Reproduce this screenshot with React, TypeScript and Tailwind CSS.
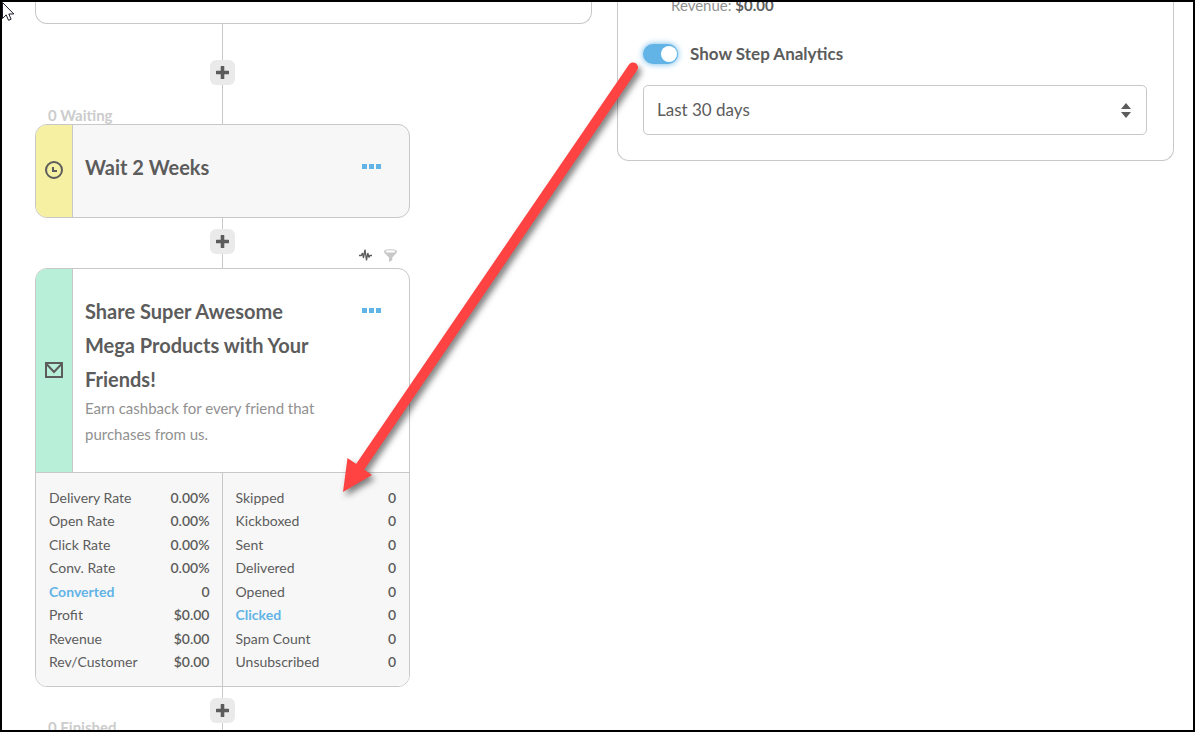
import type { ReactNode } from 'react';

type Stat = { label: string; value: string; link?: boolean };

const rates: Stat[] = [
  { label: 'Delivery Rate', value: '0.00%' },
  { label: 'Open Rate', value: '0.00%' },
  { label: 'Click Rate', value: '0.00%' },
  { label: 'Conv. Rate', value: '0.00%' },
  { label: 'Converted', value: '0', link: true },
  { label: 'Profit', value: '$0.00' },
  { label: 'Revenue', value: '$0.00' },
  { label: 'Rev/Customer', value: '$0.00' },
];

const counts: Stat[] = [
  { label: 'Skipped', value: '0' },
  { label: 'Kickboxed', value: '0' },
  { label: 'Sent', value: '0' },
  { label: 'Delivered', value: '0' },
  { label: 'Opened', value: '0' },
  { label: 'Clicked', value: '0', link: true },
  { label: 'Spam Count', value: '0' },
  { label: 'Unsubscribed', value: '0' },
];

function StatTable({ stats, name }: { stats: Stat[]; name: string }) {
  return (
    <table aria-label={name} className="h-[188px] w-full text-sm leading-5">
      <tbody>
        {stats.map((s) => (
          <tr key={s.label}>
            <th scope="row" className="p-0 text-left align-middle font-normal">
              {s.link ? (
                <a href="#" className="font-bold text-[#62b3e6]">{s.label}</a>
              ) : (
                s.label
              )}
            </th>
            <td className="p-0 text-right align-middle font-semibold">{s.value}</td>
          </tr>
        ))}
      </tbody>
    </table>
  );
}

function AddStep({ className, label, tools }: { className: string; label?: string; tools?: ReactNode }) {
  return (
    <div className={`grid grid-cols-[1fr_25px_1fr] ${className}`}>
      <div className="self-end pb-px pl-[13px] text-[15px] leading-4 font-bold text-[#cccccc]">{label}</div>
      <div className="flex flex-col items-center">
        <div className="h-9 min-h-0 w-px shrink bg-[#c8c8c8]" />
        <button
          type="button"
          aria-label="Add step"
          className="flex size-[25px] shrink-0 items-center justify-center rounded-md bg-[#eaeaea]"
        >
          <svg width="13" height="13" viewBox="0 0 13 13" fill="#5c5c5c">
            <path d="M5.3 0h2.4q.6 0 .6.6v4.1h4.1q.6 0 .6.6v2.4q0 .6-.6.6H8.300v4.100q0 .6-.6.6H5.300q-.6 0-.6-.6V8.300H.6Q0 8.300 0 7.700V5.300q0-.6.6-.6h4.100V.6q0-.6.6-.6z" />
          </svg>
        </button>
        <div className="w-px flex-1 bg-[#c8c8c8]" />
      </div>
      <div className="flex items-end justify-end gap-3 pr-[13px] pb-1.5">{tools}</div>
    </div>
  );
}

function MoreButton() {
  return (
    <button type="button" aria-label="More actions" className="flex h-[5px] shrink-0 gap-0.5">
      <span className="size-[5px] bg-[#62b3e6]" />
      <span className="size-[5px] bg-[#62b3e6]" />
      <span className="size-[5px] bg-[#62b3e6]" />
    </button>
  );
}

export default function App() {
  return (
    <div className="relative h-screen overflow-hidden border-2 border-black bg-white font-['Lato',sans-serif] text-[#5c5c5c]">
      <main className="grid grid-cols-2 items-start gap-[25px] pr-[19px] pl-[33px]">
        <section aria-label="Automation flow">
          <div className="h-[22px] rounded-b-xl border border-t-0 border-[#c8c8c8]" />
          <div className="w-[375px]">
            <AddStep className="h-[100px]" label="0 Waiting" />

            <article className="flex overflow-hidden rounded-xl border border-[#c8c8c8] bg-[#f7f7f7]">
              <div className="flex w-[37px] shrink-0 items-center justify-center border-r border-[#c8c8c8] bg-[#f6f0a2] pb-0.5">
                <svg width="18" height="18" viewBox="0 0 18 18" fill="none" stroke="#5c5c5c" strokeWidth="2">
                  <circle cx="9" cy="9" r="8" />
                  <path d="M8 6v4h4" />
                </svg>
              </div>
              <div className="flex flex-1 items-start justify-between pt-[25px] pr-7 pb-[33px] pl-3">
                <h2 className="text-xl leading-[34px] font-bold">Wait 2 Weeks</h2>
                <div className="pt-3.5"><MoreButton /></div>
              </div>
            </article>

            <AddStep
              className="h-[50px] [&>div>div:first-child]:h-[11px]"
              tools={
                <>
                  <svg width="13" height="13" viewBox="0 0 13 13" fill="none" stroke="#5c5c5c" strokeWidth="1.300" strokeLinejoin="bevel">
                    <path d="M0 6.500h2.300L3.500 4l1 5L6 .5l1.500 11L8.800 4l1.200 4.500.8-2H13" />
                  </svg>
                  <svg width="13" height="13" viewBox="0 0 13 13">
                    <path d="M0 2.500C0-.5 13-.5 13 2.500c0 1-.8 1.800-1.500 2.500L8.300 8.500v2.800L5 13V8.500L1.500 5C.8 4.300 0 3.500 0 2.500z" fill="#c8c8c8" />
                    <ellipse cx="6.500" cy="2.400" rx="4.800" ry="1.200" fill="#fff" />
                  </svg>
                </>
              }
            />

            <article className="overflow-hidden rounded-xl border border-[#c8c8c8] bg-white">
              <div className="flex border-b border-[#c8c8c8]">
                <div className="flex w-[37px] shrink-0 items-center justify-center border-r border-[#c8c8c8] bg-[#b8efd8] pb-0.5">
                  <svg width="18" height="16" viewBox="0 0 18 16" fill="none" stroke="#5c5c5c" strokeWidth="2">
                    <path d="M1 1h16v14H1zM1.500 2L9 10l7.500-8" />
                  </svg>
                </div>
                <div className="flex flex-1 items-start justify-between pt-[25px] pr-7 pb-[25px] pl-3">
                  <div className="w-60">
                    <h2 className="text-xl leading-[34px] font-bold">
                      Share Super Awesome Mega Products with Your Friends!
                    </h2>
                    <p className="-mt-px text-[15px] leading-[26px] text-[#919191]">
                      Earn cashback for every friend that purchases from us.
                    </p>
                  </div>
                  <div className="pt-3.5"><MoreButton /></div>
                </div>
              </div>
              <div className="grid grid-cols-2 bg-[#f7f7f7]">
                <div className="border-r border-[#c8c8c8] px-3 pt-[13px] pb-3 pl-[13px]">
                  <StatTable name="Rates" stats={rates} />
                </div>
                <div className="px-[13px] pt-[13px] pb-3">
                  <StatTable name="Counts" stats={counts} />
                </div>
              </div>
            </article>

            <AddStep className="h-[49px] [&>div>div:first-child]:h-[11px]" label="0 Finished" />
          </div>
        </section>

        <aside className="rounded-b-xl border border-t-0 border-[#c8c8c8] pr-[26px] pb-[25px] pl-[25px]">
          <p className="-mt-[9px] pl-7 text-[15px] leading-6 text-[#919191]">
            Revenue: <strong className="font-bold text-[#5c5c5c]">$0.00</strong>
          </p>
          <label className="mt-[23px] flex h-7 items-center gap-3 text-[17px] font-bold">
            <input
              type="checkbox"
              role="switch"
              defaultChecked
              className="h-5 w-[35px] appearance-none rounded-full bg-[#62b3e6] p-0.5 shadow-[0_0_6px_#62b3e6] before:block before:size-4 before:translate-x-4 before:rounded-full before:bg-white"
            />
            Show Step Analytics
          </label>
          <div className="mt-[17px] grid items-center">
            <select
              aria-label="Analytics period"
              className="col-start-1 row-start-1 h-[50px] w-full appearance-none rounded-[5px] border border-[#c8c8c8] bg-white px-[13px] text-[17px]"
            >
              <option>Last 30 days</option>
            </select>
            <svg className="pointer-events-none col-start-1 row-start-1 mr-4 justify-self-end" width="10" height="15" viewBox="0 0 10 15" fill="#5c5c5c">
              <path d="M0 6L5 0l5 6zM0 9h10l-5 6z" />
            </svg>
          </div>
        </aside>
      </main>

      <svg aria-hidden="true" className="pointer-events-none absolute top-[48px] left-[328px] drop-shadow-[3px_4px_3px_rgba(0,0,0,0.5)]" width="330" height="460" viewBox="330 50 330 460">
        <path d="M633 67.500L358 470" stroke="#ff4242" strokeWidth="10" strokeLinecap="round" />
        <path d="M343 492L347.500 458L357 464.500L364 469.500L372 475z" fill="#ff4242" />
      </svg>

      <svg aria-hidden="true" className="pointer-events-none absolute top-0 left-0" width="13" height="20" viewBox="0 0 13 20">
        <path d="M.5.500v16l3.700-3.600 2.300 5.400 2.600-1.100-2.300-5.200h5z" fill="#fff" stroke="#1c1c2c" />
      </svg>
    </div>
  );
}
